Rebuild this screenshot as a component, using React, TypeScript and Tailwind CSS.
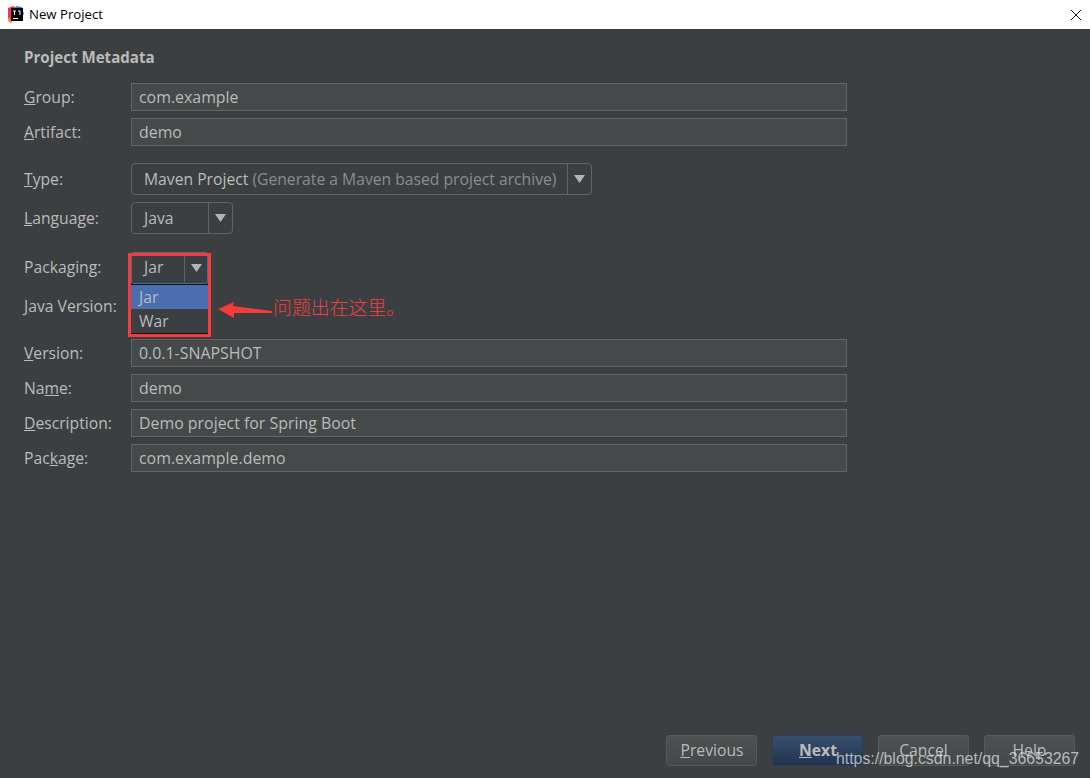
import { ReactNode } from 'react';

function Label({ children, flush }: { children: ReactNode; flush?: boolean }) {
    return <div className={`w-[107px] shrink-0 text-[15.7px] text-[#bbbbbb] ${flush ? '' : 'pt-[2px]'}`}>{children}</div>;
}

function TextRow({ label, value }: { label: ReactNode; value: string }) {
    return (
        <div className="flex items-center h-[28px]">
            <Label>{label}</Label>
            <div className="w-[716px] h-full flex items-center pl-[7px] pt-[2px] bg-[#45494a] border border-[#646464] text-[15.9px] text-[#bbbbbb]">
                {value}
            </div>
        </div>
    );
}

function Combo({ width, children }: { width: string; children: ReactNode }) {
    return (
        <div className={`${width} h-[32px] flex items-center border border-[#646464] rounded-[4px] bg-[#3c3f41] text-[15.7px] text-[#bbbbbb]`}>
            <div className="flex-1 pl-[12px] pt-[2px] whitespace-nowrap">{children}</div>
            <div className="w-[24px] h-full flex items-center justify-center border-l border-[#646464]">
                <Arrow />
            </div>
        </div>
    );
}

function Arrow() {
    return (
        <svg width="11" height="8" viewBox="0 0 11 8">
            <polygon points="0,0 11,0 5.5,8" fill="#b4b4b4" />
        </svg>
    );
}

function Btn({ children, primary }: { children: ReactNode; primary?: boolean }) {
    return (
        <button
            className={`w-[91px] h-[31px] flex items-center justify-center rounded-[3px] border text-[15.7px] text-[#bbbbbb] ${
                primary
                    ? 'border-[#2a3e58] bg-gradient-to-b from-[#364f70] to-[#22344e] font-bold'
                    : 'border-[#555a5c] bg-gradient-to-b from-[#4d5152] to-[#44484a]'
            }`}
        >
            {children}
        </button>
    );
}

function JetBrainsIcon() {
    return (
        <svg width="16" height="17" viewBox="0 0 16 17">
            <polygon points="0,2 5,0 9,2 3,16 0,12" fill="#f5315f" />
            <polygon points="8,0 14,1 16,8 12,14 5,8" fill="#3a7bf0" />
            <polygon points="1,11 5,15 3,17 0,15" fill="#fc801d" />
            <rect x="3" y="2" width="12" height="13" fill="#000000" />
            <rect x="5" y="12" width="5" height="1" fill="#ffffff" />
            <path d="M5 5h3M6.5 5v4M10 5h2v4" stroke="#ffffff" strokeWidth="1" fill="none" />
        </svg>
    );
}

export default function App() {
    return (
        <div className="relative w-[1090px] h-[778px] flex flex-col overflow-hidden bg-[#3c3f41] font-['Open_Sans','Noto_Sans',sans-serif]">
            {/* Title bar */}
            <div className="h-[29px] shrink-0 flex items-center justify-between bg-white pl-[8px] pr-[8px]">
                <div className="flex items-center gap-[5px]">
                    <JetBrainsIcon />
                    <span className="text-[13.2px] text-black">New Project</span>
                </div>
                <svg width="12" height="12" viewBox="0 0 12 12">
                    <path d="M1 1l10 10M11 1L1 11" stroke="#1a1a1a" strokeWidth="1" />
                </svg>
            </div>

            {/* Form */}
            <div className="flex-1 flex flex-col pl-[24px]">
                <div className="mt-[18px] h-[21px] text-[15.1px] font-bold text-[#bbbbbb] leading-[21px]">Project Metadata</div>
                <div className="mt-[15px] flex flex-col gap-[7px]">
                    <TextRow label={<><u>G</u>roup:</>} value="com.example" />
                    <TextRow label={<><u>A</u>rtifact:</>} value="demo" />
                </div>
                <div className="mt-[17px] flex flex-col gap-[7px]">
                    <div className="flex items-center h-[32px]">
                        <Label><u>T</u>ype:</Label>
                        <Combo width="w-[461px]">
                            Maven Project <span className="text-[#8c8c8c]">(Generate a Maven based project archive)</span>
                        </Combo>
                    </div>
                    <div className="flex items-center h-[32px]">
                        <Label><u>L</u>anguage:</Label>
                        <Combo width="w-[102px]">Java</Combo>
                    </div>
                </div>
                <div className="mt-[18px] flex flex-col gap-[7px]">
                    <div className="flex items-center h-[32px]">
                        <Label flush>Packaging:</Label>
                    </div>
                    <div className="flex items-center h-[32px]">
                        <Label flush><u>J</u>ava Version:</Label>
                    </div>
                </div>
                <div className="mt-[16px] flex flex-col gap-[7px]">
                    <TextRow label={<><u>V</u>ersion:</>} value="0.0.1-SNAPSHOT" />
                    <TextRow label={<>Na<u>m</u>e:</>} value="demo" />
                    <TextRow label={<><u>D</u>escription:</>} value="Demo project for Spring Boot" />
                    <TextRow label={<>Pac<u>k</u>age:</>} value="com.example.demo" />
                </div>
                <div className="mt-auto mb-[12px] mr-[15px] flex justify-end gap-[15px]">
                    <Btn><span className="pl-[1px]"><u>P</u>revious</span></Btn>
                    <Btn primary><span className="pl-[1px]"><u>N</u>ext</span></Btn>
                    <Btn>Cancel</Btn>
                    <Btn>Help</Btn>
                </div>
            </div>

            {/* Open Packaging popup */}
            <div className="absolute left-[131px] top-[252px] w-[77px] flex flex-col text-[15.7px] text-[#bbbbbb]">
                <div className="h-[32px] flex items-center pb-[1px] border border-[#466d94] rounded-[3px] bg-[#3c3f41]">
                    <div className="flex-1 pl-[12px]">Jar</div>
                    <div className="w-[23px] h-full flex items-center justify-center border-l border-[#646464]">
                        <Arrow />
                    </div>
                </div>
                <div className="h-[1px] bg-[#111111]" />
                <div className="h-[24px] flex items-center pl-[8px] pt-[2px] bg-[#4b6eaf]">Jar</div>
                <div className="h-[24px] flex items-center pl-[8px] pt-[2px] bg-[#3c3f41]">War</div>
                <div className="h-[2px] bg-[#111111]" />
            </div>

            {/* Red annotation */}
            <div className="absolute left-[128px] top-[253px] w-[83px] h-[84px] border-[3px] border-[#f93a3a]" />
            <svg className="absolute left-[216px] top-[300px]" width="58" height="20" viewBox="216 300 58 20">
                <polygon points="218,309 234,302 233,306 272,311 272,313 234,313 234,318" fill="#f93a3a" />
            </svg>
            <div className="absolute left-[273px] top-[295px] text-[18.9px] leading-[24px] text-[#ee4040] font-['Noto_Sans_CJK_SC',sans-serif] font-light">
                问题出在这里。
            </div>

            {/* Watermark */}
            <div className="absolute left-[836px] top-[749px] text-[15.85px] leading-[20px] text-[#ffffffa0] font-['Liberation_Sans',sans-serif]">
                https://blog.csdn.net/qq_36653267
            </div>
        </div>
    );
}
